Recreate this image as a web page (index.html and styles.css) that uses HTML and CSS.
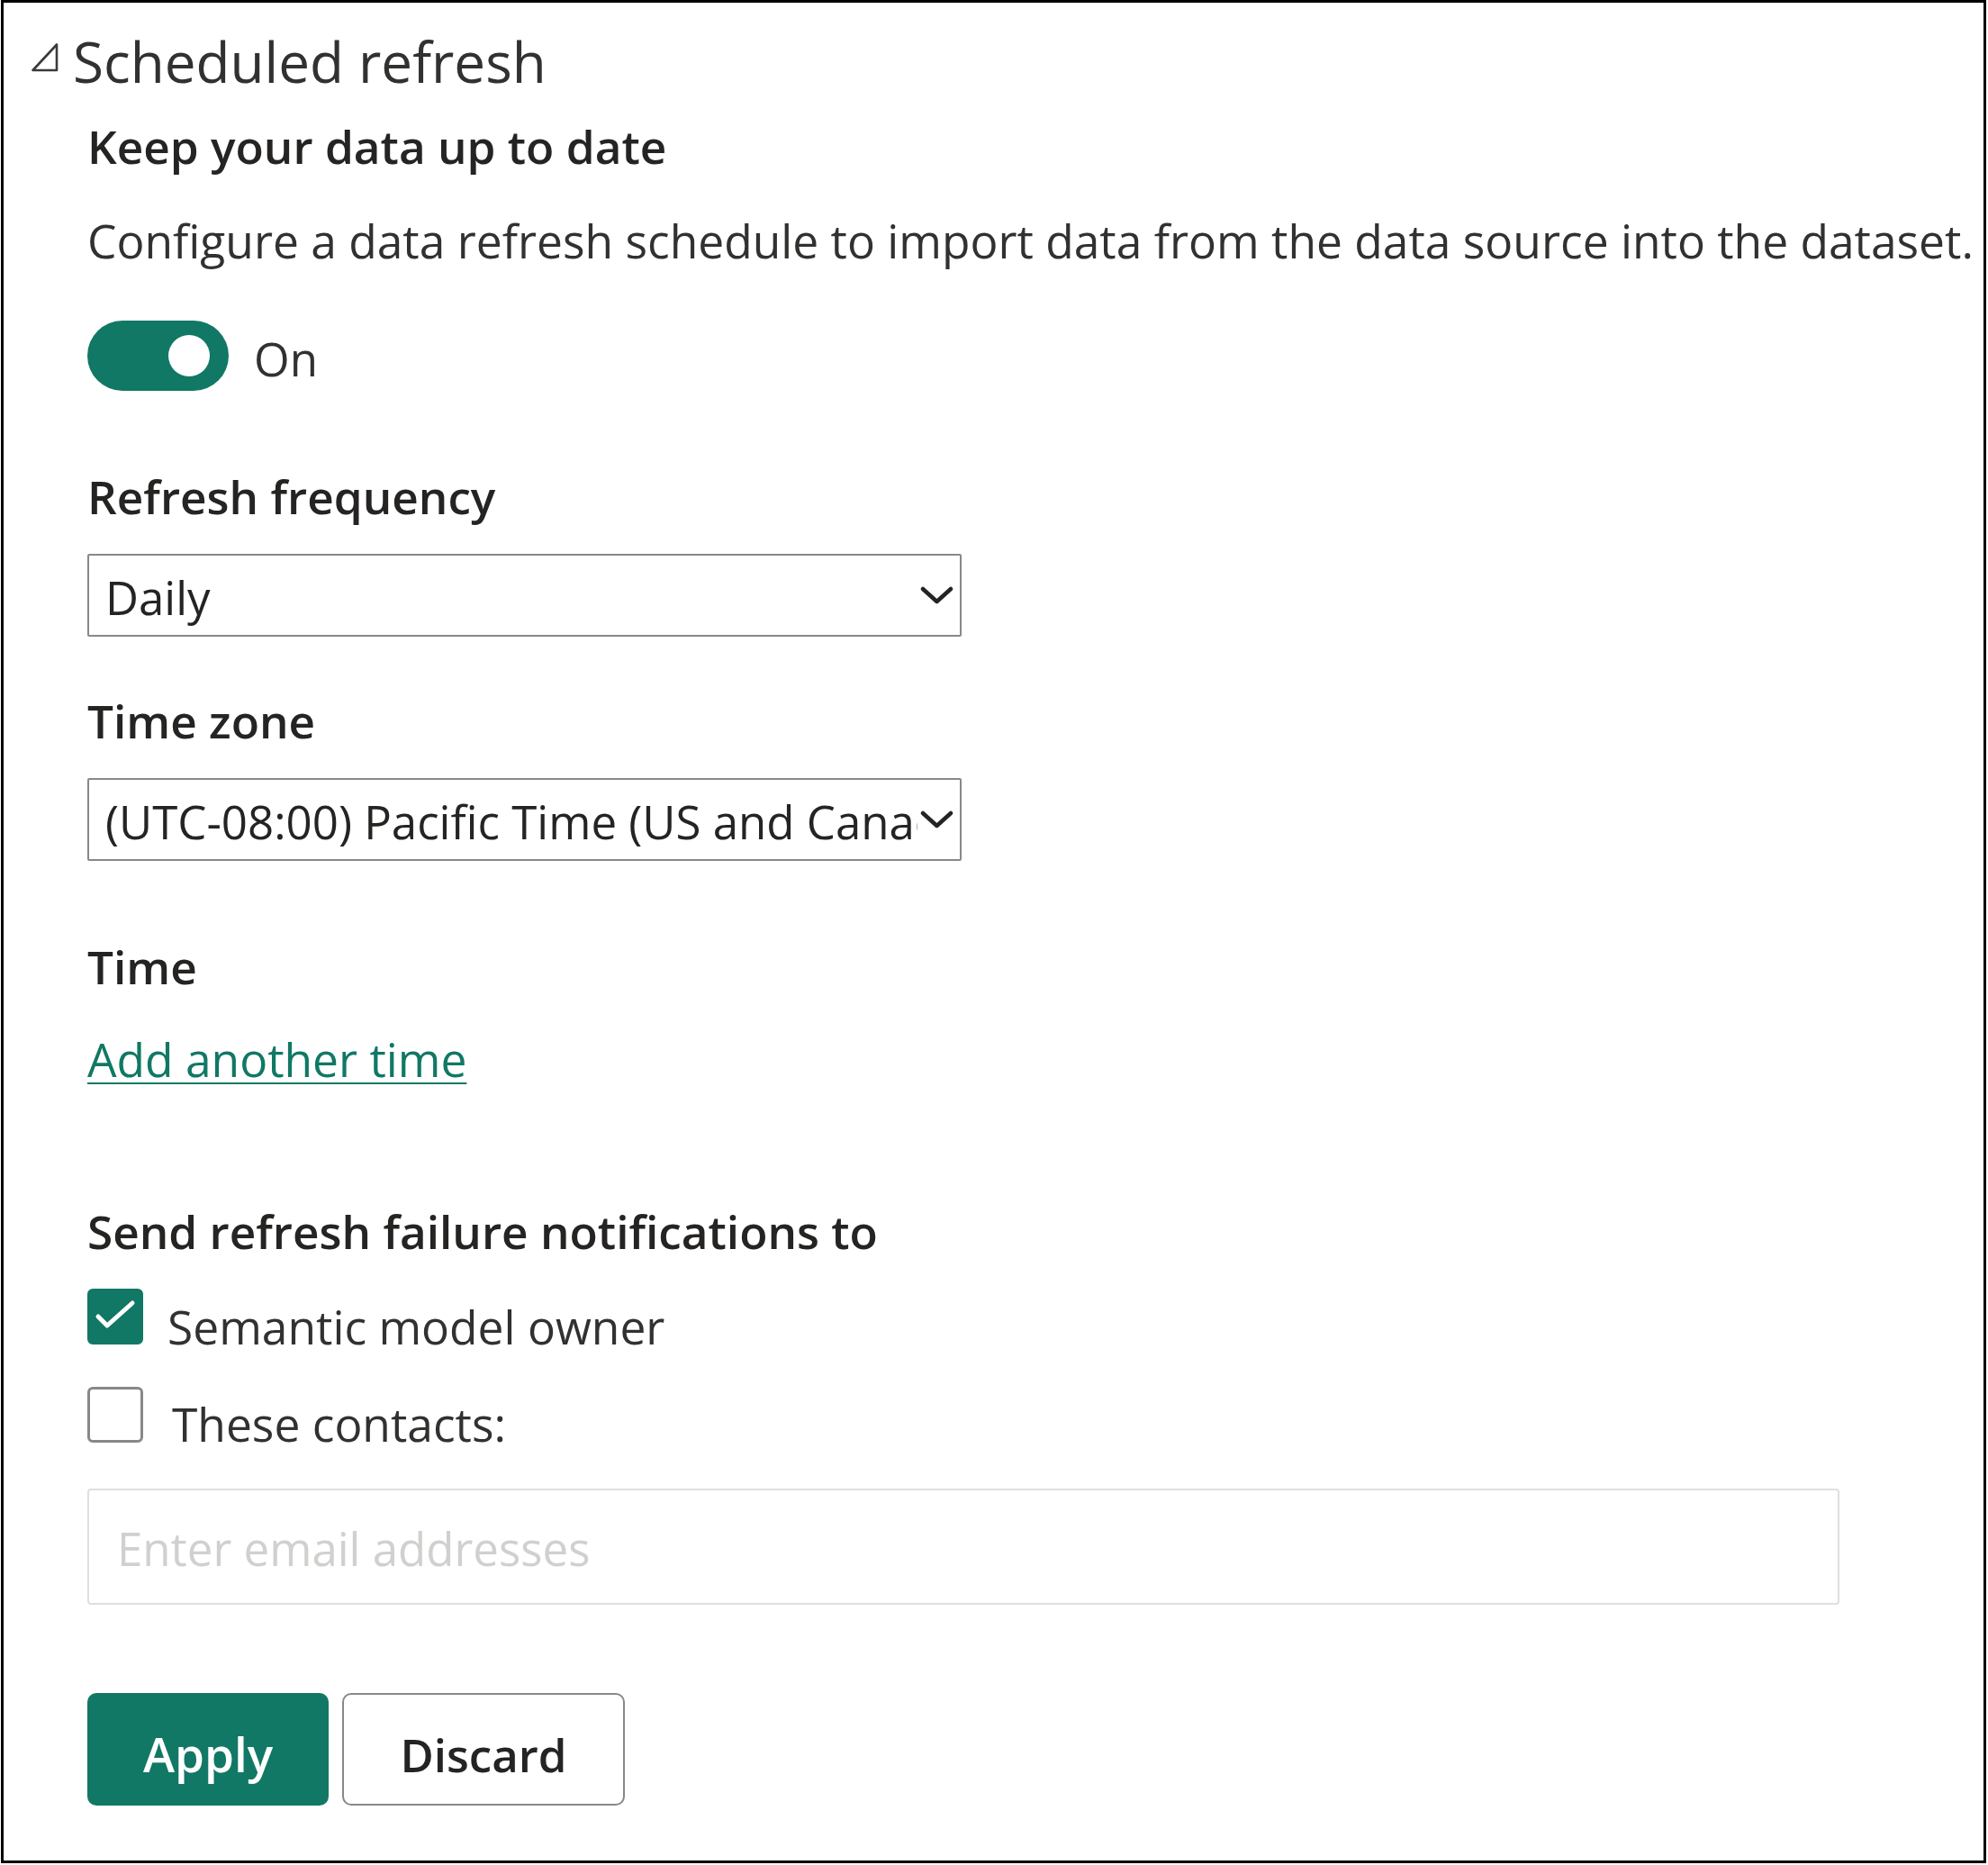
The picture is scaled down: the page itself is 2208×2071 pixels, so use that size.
FILE: index.html
```html
<!DOCTYPE html>
<html lang="en">
<head>
<meta charset="utf-8">
<title>Scheduled refresh</title>
<link rel="stylesheet" href="styles.css">
</head>
<body>
<div class="frame">
  <div class="title-row">
    <svg class="caret" width="30" height="33" viewBox="0 0 30 33" aria-hidden="true">
      <path d="M28 2.5 V31 H1.5 Z" fill="none" stroke="#3b3a39" stroke-width="2.6" stroke-linejoin="round"/>
    </svg>
    <h1 class="title">Scheduled refresh</h1>
  </div>
  <section class="content">
    <h2 class="heading keep">Keep your data up to date</h2>
    <p class="desc">Configure a data refresh schedule to import data from the data source into the dataset.</p>
    <div class="toggle-row">
      <span class="toggle"><span class="knob"></span></span>
      <span class="toggle-label">On</span>
    </div>

    <h2 class="heading freq">Refresh frequency</h2>
    <div class="dropdown dd-freq">
      <span class="dd-value">Daily</span>
      <svg class="chev" width="37" height="20" viewBox="0 0 37 20" aria-hidden="true">
        <polyline points="3,3 18.5,17 34,3" fill="none" stroke="#252423" stroke-width="4.5" stroke-linecap="round" stroke-linejoin="round"/>
      </svg>
    </div>

    <h2 class="heading tz">Time zone</h2>
    <div class="dropdown dd-tz">
      <span class="dd-value">(UTC-08:00) Pacific Time (US and Canada)</span>
      <svg class="chev" width="37" height="20" viewBox="0 0 37 20" aria-hidden="true">
        <polyline points="3,3 18.5,17 34,3" fill="none" stroke="#252423" stroke-width="4.5" stroke-linecap="round" stroke-linejoin="round"/>
      </svg>
    </div>

    <h2 class="heading time">Time</h2>
    <a class="add-link" href="#">Add another time</a>

    <h2 class="heading send">Send refresh failure notifications to</h2>
    <label class="check-row row-owner">
      <span class="box checked">
        <svg width="62" height="62" viewBox="0 0 62 62" aria-hidden="true">
          <polyline points="12,31 22,41 50,16" fill="none" stroke="#ffffff" stroke-width="5" stroke-linecap="round" stroke-linejoin="round"/>
        </svg>
      </span>
      <span class="check-label">Semantic model owner</span>
    </label>
    <label class="check-row row-contacts">
      <span class="box"></span>
      <span class="check-label">These contacts:</span>
    </label>

    <input class="email" type="text" placeholder="Enter email addresses">

    <div class="actions">
      <button class="btn btn-primary" type="button">Apply</button>
      <button class="btn btn-secondary" type="button">Discard</button>
    </div>
  </section>
</div>
</body>
</html>
```
FILE: styles.css
```css
* {
  box-sizing: border-box;
}

html,
body {
  margin: 0;
  padding: 0;
  background: #ffffff;
}

body {
  font-family: "Open Sans", "Noto Sans", sans-serif;
  font-size: 51px;
  color: #252423;
}

.frame {
  width: 2205px;
  height: 2069px;
  margin-left: 1px;
  border: 3px solid #000000;
  display: flex;
  flex-direction: column;
  overflow: hidden;
}

/* ---------- title ---------- */
.title-row {
  display: flex;
  align-items: flex-start;
  margin-top: 24px;
  padding-left: 31px;
  height: 82px;
}

.caret {
  flex: none;
  margin-top: 20px;
}

.title {
  margin: 0 0 0 16px;
  font-size: 62px;
  font-weight: 400;
  line-height: 82px;
  color: #323130;
  white-space: nowrap;
}

/* ---------- content column ---------- */
.content {
  display: flex;
  flex-direction: column;
  align-items: flex-start;
  padding-left: 93px;
}

.heading {
  margin: 0;
  font-size: 51.3px;
  font-weight: 600;
  line-height: 70px;
  color: #252423;
  white-space: nowrap;
}

.keep { margin-top: 18px; }
.freq { margin-top: 82px; }
.tz { margin-top: 58px; }
.time { margin-top: 82px; }
.send { margin-top: 121px; }

.desc {
  margin: 35px 0 0;
  font-size: 51.5px;
  line-height: 70px;
  color: #323130;
  white-space: nowrap;
}

/* ---------- toggle ---------- */
.toggle-row {
  display: flex;
  align-items: flex-start;
  margin-top: 54px;
}

.toggle {
  position: relative;
  width: 157px;
  height: 78px;
  border-radius: 39px;
  background: #117865;
  flex: none;
}

.knob {
  position: absolute;
  top: 16px;
  right: 21px;
  width: 46px;
  height: 46px;
  border-radius: 50%;
  background: #ffffff;
}

.toggle-label {
  margin: 7px 0 0 28px;
  line-height: 70px;
  color: #323130;
}

/* ---------- dropdowns ---------- */
.dropdown {
  display: flex;
  align-items: center;
  width: 971px;
  height: 92px;
  margin-top: 29px;
  padding: 4px 7px 0 18px;
  border: 2px solid #8a8886;
  border-radius: 2px;
  background: #ffffff;
}

.dd-value {
  flex: 1;
  min-width: 0;
  overflow: hidden;
  white-space: nowrap;
  line-height: 70px;
  color: #252423;
}

.chev {
  flex: none;
  margin-left: 3px;
  margin-top: -4px;
}

/* ---------- link ---------- */
.add-link {
  margin-top: 33px;
  line-height: 70px;
  font-size: 51.5px;
  color: #117865;
  text-decoration: underline;
  text-decoration-thickness: 2px;
  text-underline-offset: 6px;
  white-space: nowrap;
}

/* ---------- checkboxes ---------- */
.check-row {
  display: flex;
  align-items: flex-start;
}

.row-owner { margin-top: 29px; }
.row-contacts { margin-top: 32px; }

.box {
  flex: none;
  width: 62px;
  height: 62px;
  border-radius: 6px;
  border: 3px solid #8a8886;
  background: #ffffff;
}

.box svg {
  display: block;
  margin: -3px;
}

.box.checked {
  border-color: #117865;
  background: #117865;
}

.check-label {
  margin-left: 27px;
  line-height: 70px;
  font-size: 51.5px;
  color: #323130;
  white-space: nowrap;
}

.row-owner .check-label { margin-top: 7px; }
.row-contacts .check-label {
  margin-top: 6px;
  margin-left: 32px;
}

/* ---------- email ---------- */
.email {
  display: block;
  width: 1946px;
  height: 129px;
  margin-top: 37px;
  padding: 3px 31px 0;
  border: 2px solid #e1dfdd;
  border-radius: 4px;
  font-family: "Open Sans", "Noto Sans", sans-serif;
  font-size: 51px;
  color: #252423;
  background: #ffffff;
  outline: none;
}

.email::placeholder {
  color: #d2d0ce;
}

/* ---------- buttons ---------- */
.actions {
  display: flex;
  gap: 15px;
  margin-top: 98px;
}

.btn {
  height: 125px;
  padding: 10px 0 0;
  border-radius: 10px;
  font-family: "Open Sans", "Noto Sans", sans-serif;
  font-size: 51px;
  font-weight: 600;
  line-height: 70px;
  cursor: pointer;
}

.btn-primary {
  width: 268px;
  border: 2px solid #117865;
  background: #117865;
  color: #ffffff;
  font-size: 53px;
}

.btn-secondary {
  width: 314px;
  border: 2px solid #8a8886;
  background: #ffffff;
  color: #252423;
}
```
